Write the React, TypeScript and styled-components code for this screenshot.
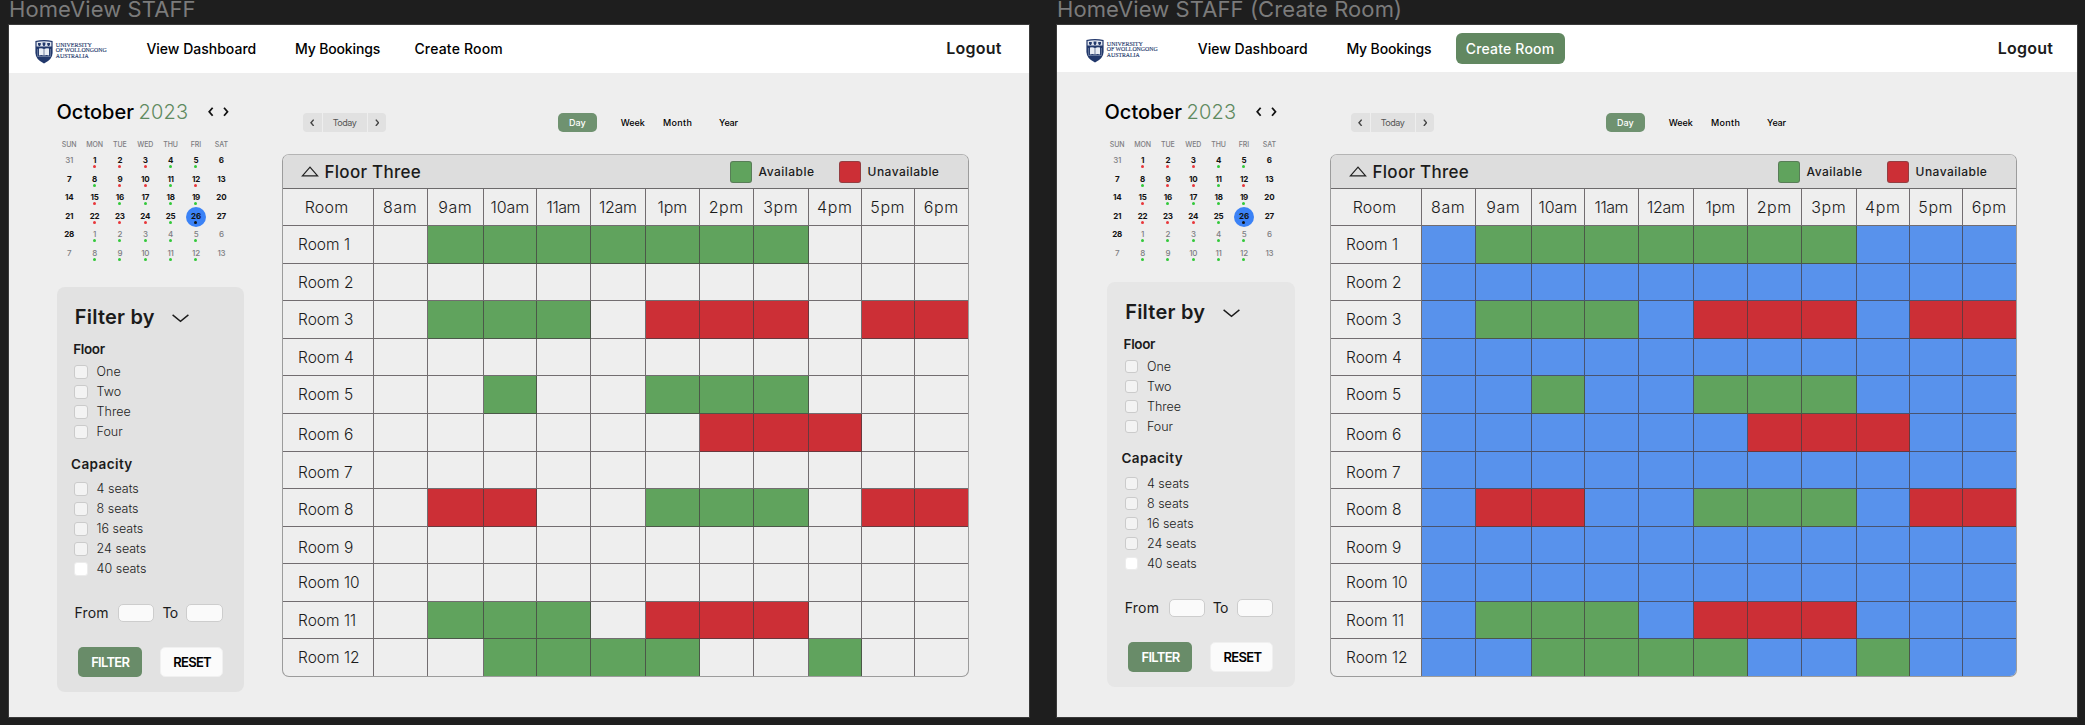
import React from 'react';
import styled, { createGlobalStyle, css } from 'styled-components';

const GlobalStyle = createGlobalStyle`
  * { box-sizing: border-box; }
  body { margin: 0; background: #1e1e1e; font-family: Inter, "Liberation Sans", sans-serif; color: #1b1b1b; }
`;

type Status = 'free' | 'busy' | 'none';
const statusColor = { free: '#60a35d', busy: '#cc2f36' };
const gridLine = 'rgba(66, 60, 64, 0.72)';

/* ---------- canvas ---------- */

const Canvas = styled.div`
  display: flex;
  gap: 28px;
  width: 2085px;
  height: 725px;
  padding-left: 9px;
  overflow: hidden;
  background: #1e1e1e;
`;

const Artboard = styled.section`
  display: flex;
  flex-direction: column;
  width: 1020px;
`;

const ArtboardTitle = styled.h2`
  margin: 0;
  height: 25px;
  font-size: 22px;
  font-weight: 400;
  line-height: 19px;
  letter-spacing: 0.1px;
  color: #7b7b7b;
  white-space: nowrap;
`;

const Frame = styled.div`
  display: flex;
  flex-direction: column;
  height: 692px;
  background: #eeeeee;
  box-shadow: 0 0 0 1px #3a3a3a;
`;

/* ---------- header ---------- */

const Header = styled.header<{ $tall: boolean }>`
  display: flex;
  align-items: center;
  height: ${(p) => (p.$tall ? 48 : 47)}px;
  padding: ${(p) => (p.$tall ? '0 27.5px 0 26px' : '0 24px 0 29.4px')};
  background: #fff;
`;

const LogoMark = styled.svg`
  display: block;
  overflow: visible;
  width: 74px;
  height: 24px;
  margin-top: 5px;
`;

const Nav = styled.nav`
  display: flex;
  align-items: center;
  margin-left: 37.4px;
  font-size: 14px;
  font-weight: 500;
  color: #000;
`;

const NavLink = styled.a<{ $width: number; $active?: boolean; $spacing?: number }>`
  display: flex;
  align-items: center;
  width: ${(p) => p.$width}px;
  height: 31px;
  padding-bottom: 1px;
  white-space: nowrap;
  letter-spacing: ${(p) => p.$spacing ?? 0}px;
  ${(p) =>
    p.$active &&
    css`
      margin-left: -9.5px;
      padding-left: 9.5px;
      border-radius: 6px;
      background: #628861;
      color: #fff;
    `}
`;

const Logout = styled.a`
  margin: -2px 0 0 auto;
  font-size: 16px;
  font-weight: 600;
  letter-spacing: 0.2px;
`;

const Logo = () => (
  <LogoMark viewBox="0 0 74 24">
    <path d="M.4 1Q9 -1 17.6 1V13Q17.4 19.5 9 23.5Q.6 19.5 .4 13Z" fill="#22386b" />
    <path d="M1.6 1.9Q9 .4 16.4 1.9V6.4H1.6Z" fill="#dfe4ee" />
    <path d="M3 3h2.8v1.6l-.8 1.3H3.8L3 4.6zM7.6 2.6h2.8v1.8L9.6 6H8.4l-.8-1.6zM12.2 3H15v1.6l-.8 1.3H13l-.8-1.3z" fill="#22386b" />
    <path d="M4 8.6Q6.6 7.8 8.7 9V15.6Q6.6 14.6 4 15.4ZM14 8.6Q11.4 7.8 9.3 9V15.6Q11.4 14.6 14 15.4Z" fill="#e9edf4" />
    <path d="M2.6 9V16.5H15.4V9" fill="none" stroke="#8f9dbb" strokeWidth=".6" />
    <g fill="#22386b" stroke="#22386b" strokeWidth=".15" fontFamily='"Liberation Serif", serif' fontSize="7">
      <text x="20.8" y="6.5" textLength="36" lengthAdjust="spacingAndGlyphs">UNIVERSITY</text>
      <text x="20.8" y="12" textLength="50.8" lengthAdjust="spacingAndGlyphs">OF WOLLONGONG</text>
      <text x="20.8" y="17.5" textLength="32.8" lengthAdjust="spacingAndGlyphs">AUSTRALIA</text>
    </g>
  </LogoMark>
);

/* ---------- body ---------- */

const Body = styled.div<{ $tall: boolean }>`
  display: flex;
  padding-top: ${(p) => (p.$tall ? 27 : 28)}px;
`;

const Sidebar = styled.aside`
  display: flex;
  flex-direction: column;
  width: 273px;
  padding-left: 47.5px;
`;

const MonthRow = styled.div`
  display: flex;
  align-items: center;
  height: 24px;
  font-size: 20px;
`;

const MonthName = styled.span`
  width: 82px;
  font-weight: 500;
  color: #000;
`;

const YearName = styled.span`
  width: 69.4px;
  font-weight: 300;
  letter-spacing: 0.2px;
  color: #5f8a5f;
`;

const Arrow = styled.svg<{ $size: number; $color: string; $gap?: number }>`
  display: block;
  width: ${(p) => p.$size * 0.6}px;
  height: ${(p) => p.$size}px;
  margin-left: ${(p) => p.$gap ?? 0}px;
  fill: none;
  stroke: ${(p) => p.$color};
  stroke-width: 1.9;
`;

const Weekdays = styled.div`
  display: grid;
  grid-template-columns: repeat(7, 25.37px);
  height: 13px;
  margin-top: 14px;
  font-size: 7px;
  font-weight: 500;
  line-height: 14px;
  letter-spacing: -0.1px;
  text-align: center;
  color: #7d7d82;
`;

const Days = styled.div`
  display: grid;
  grid-template-columns: repeat(7, 25.37px);
  grid-auto-rows: 18.6px;
`;

const DayCell = styled.div<{ $muted: boolean; $selected: boolean }>`
  position: relative;
  z-index: 0;
  display: flex;
  flex-direction: column;
  align-items: center;
  font-size: 8px;
  font-weight: ${(p) => (p.$muted ? 500 : 700)};
  line-height: 18px;
  letter-spacing: -0.25px;
  color: ${(p) => (p.$muted ? '#7d7d82' : '#111')};
  ${(p) =>
    p.$selected &&
    css`
      &::before {
        content: '';
        position: absolute;
        z-index: -1;
        top: 0;
        left: calc(50% - 10px);
        width: 20px;
        height: 20px;
        border-radius: 50%;
        background: #3b82f6;
      }
    `}
`;

const Dot = styled.i<{ $color: string }>`
  width: 3px;
  height: 3px;
  margin-top: -4px;
  border-radius: 50%;
  background: ${(p) => p.$color};
`;

/* ---------- filter panel ---------- */

const Panel = styled.div<{ $tall: boolean }>`
  width: 187.5px;
  height: 405.5px;
  margin: ${(p) => (p.$tall ? '24.4px 0 0 0.3px' : '19.2px 0 0 2.7px')};
  padding-top: 18.2px;
  border-radius: 8px;
  background: ${(p) => (p.$tall ? '#e2e2e2' : '#e6e6e6')};
`;

const PanelTitle = styled.div`
  display: flex;
  align-items: center;
  height: 24px;
  padding-left: 18px;
  font-size: 20px;
  font-weight: 600;
  letter-spacing: 0.22px;
  white-space: nowrap;
`;

const Chevron = styled.svg`
  width: 17px;
  height: 9px;
  margin-left: 17.6px;
  margin-top: 3px;
  fill: none;
  stroke: #1b1b1b;
  stroke-width: 1.4;
`;

const GroupTitle = styled.div<{ $top: number; $left: number; $spacing: number }>`
  margin-top: ${(p) => p.$top}px;
  padding-left: ${(p) => p.$left}px;
  font-size: 13.5px;
  font-weight: 600;
  line-height: 20px;
  letter-spacing: ${(p) => p.$spacing}px;
`;

const OptionList = styled.div<{ $top: number }>`
  display: flex;
  flex-direction: column;
  margin-top: ${(p) => p.$top}px;
  padding-left: 17.6px;
`;

const Option = styled.label`
  display: flex;
  align-items: center;
  gap: 8.6px;
  height: 20px;
  font-size: 12.5px;
  font-weight: 300;
`;

const Box = styled.span<{ $bright: boolean }>`
  width: 13.6px;
  height: 13.6px;
  border: 1px solid ${(p) => (p.$bright ? '#ececec' : '#cbcbcb')};
  border-radius: 3px;
  background: ${(p) => (p.$bright ? '#ffffff' : '#f3f3f3')};
`;

const RangeRow = styled.div`
  display: flex;
  align-items: center;
  height: 18px;
  margin-top: 25px;
  padding-left: 17.6px;
  font-size: 14px;
`;

const RangeLabel = styled.span<{ $width: number }>`
  width: ${(p) => p.$width}px;
  padding-bottom: 1px;
  letter-spacing: ${(p) => (p.$width > 40 ? 0.2 : -0.6)}px;
`;

const RangeInput = styled.span`
  width: 36.2px;
  height: 18px;
  margin-right: 8px;
  border: 1px solid #cdcdcd;
  border-radius: 5px;
  background: #fafafa;
`;

const Buttons = styled.div`
  display: flex;
  gap: 18.4px;
  margin-top: 25.4px;
  padding-left: 20.9px;
`;

const PanelButton = styled.button<{ $primary?: boolean }>`
  width: ${(p) => (p.$primary ? 64 : 63)}px;
  height: 30px;
  padding: 0 0 0 1px;
  border: ${(p) => (p.$primary ? '0' : '1px solid #f0f0f0')};
  border-radius: 5px;
  background: ${(p) => (p.$primary ? '#698c69' : '#fbfbfb')};
  color: ${(p) => (p.$primary ? '#fff' : '#000')};
  font-family: inherit;
  font-size: 13px;
  font-weight: 600;
  letter-spacing: -0.7px;
`;

/* ---------- toolbar ---------- */

const Main = styled.main`
  width: 687px;
`;

const Toolbar = styled.div`
  display: flex;
  align-items: center;
  height: 19px;
  margin-top: 13px;
  padding-left: 21px;
  font-size: 9px;
`;

const Pager = styled.div`
  display: flex;
  gap: 1px;
  width: 83px;
  height: 19px;
  border-radius: 4px;
  overflow: hidden;
`;

const PagerPart = styled.span<{ $grow?: boolean }>`
  display: flex;
  align-items: center;
  justify-content: center;
  width: 18.5px;
  flex: ${(p) => (p.$grow ? '1' : 'none')};
  letter-spacing: -0.5px;
  background: #e1e1e1;
  color: #555;
`;

const ViewTab = styled.span<{ $width: number; $active?: boolean; $spacing?: number }>`
  width: ${(p) => p.$width}px;
  font-weight: 500;
  color: #000;
  letter-spacing: ${(p) => p.$spacing ?? 0}px;
  ${(p) =>
    p.$active &&
    css`
      height: 19px;
      margin: 0 24px 0 172px;
      border-radius: 5px;
      background: #6f9270;
      color: #fff;
      text-align: center;
      line-height: 19px;
    `}
`;

/* ---------- schedule ---------- */

const Schedule = styled.div`
  width: 687px;
  margin-top: 22px;
  border: 1px solid #9c9c9c;
  border-top-color: #b4b4b4;
  border-radius: 7px;
  overflow: hidden;
`;

const ScheduleTitle = styled.div`
  display: flex;
  align-items: center;
  height: 34px;
  padding-left: 17.5px;
  border-bottom: 1px solid #6c6a6b;
  background: #dddddd;
  font-size: 17px;
  font-weight: 500;
  letter-spacing: 0.27px;
`;

const Triangle = styled.svg`
  width: 18px;
  height: 11px;
  margin-right: 6px;
  fill: none;
  stroke: #222;
  stroke-width: 1.2;
`;

const Legend = styled.div`
  display: flex;
  margin-left: auto;
`;

const LegendItem = styled.div<{ $width: number }>`
  display: flex;
  align-items: center;
  gap: 6.4px;
  width: ${(p) => p.$width}px;
  font-size: 12px;
  letter-spacing: 0.46px;
`;

const Swatch = styled.span<{ $color: string }>`
  width: 22.4px;
  height: 22px;
  border: 1px solid rgba(80, 80, 80, 0.45);
  border-radius: 3px;
  background: ${(p) => p.$color};
`;

const Grid = styled.div`
  display: grid;
  grid-template-columns: 91px 54px 56px 53px 54px 55px 54px 54px 55px 53px 53px 53px;
  grid-template-rows: 37px 38px 37px 38px 37px 38px 38px 37px 38px 37px 38px 37px 37px;
`;

const Cell = styled.div<{ $last: boolean; $bottom: boolean; $fill?: string }>`
  border-right: ${(p) => (p.$last ? '0' : `1px solid ${gridLine}`)};
  border-bottom: ${(p) => (p.$bottom ? '0' : `1px solid ${gridLine}`)};
  background: ${(p) => p.$fill ?? 'transparent'};
`;

const HeadCell = styled(Cell)<{ $spacing: number; $inset: number }>`
  display: flex;
  align-items: center;
  justify-content: center;
  padding-right: ${(p) => p.$inset}px;
  font-size: 16px;
  font-weight: 300;
  letter-spacing: ${(p) => p.$spacing}px;
`;

const RoomCell = styled(Cell)<{ $drop: number }>`
  display: flex;
  align-items: center;
  padding-left: 15px;
  padding-top: ${(p) => p.$drop * 2}px;
  font-size: 15.5px;
  font-weight: 300;
`;

/* ---------- data ---------- */

const R = '#e8363a';
const G = '#32c83a';
const K = '#111111';
const weeks: [number, (string | null)?, boolean?][][] = [
  [[31, null, true], [1, R], [2, R], [3, R], [4, G], [5, G], [6]],
  [[7], [8, G], [9, R], [10, R], [11, G], [12, R], [13]],
  [[14], [15, R], [16, G], [17, G], [18, G], [19, G], [20]],
  [[21], [22, R], [23, R], [24, R], [25, G], [26, K], [27]],
  [[28], [1, G, true], [2, G, true], [3, G, true], [4, G, true], [5, G, true], [6, null, true]],
  [[7, null, true], [8, G, true], [9, G, true], [10, G, true], [11, G, true], [12, G, true], [13, null, true]],
];

const hours: [string, number][] = [
  ['8am', 0.6], ['9am', 0.6], ['10am', -0.1], ['11am', -0.5], ['12am', -0.3], ['1pm', -0.1],
  ['2pm', 0.6], ['3pm', 0.6], ['4pm', 0.6], ['5pm', 0.6], ['6pm', 0.6],
];

// One character per hour: f = free, b = busy, . = nothing set
const rooms: { slots: string; drop?: number }[] = [
  { slots: '.fffffff...' },
  { slots: '...........' },
  { slots: '.fff.bbb.bb' },
  { slots: '...........' },
  { slots: '..f..fff...' },
  { slots: '......bbb..', drop: 2 },
  { slots: '...........', drop: 2 },
  { slots: '.bb..fff.bb', drop: 2.4 },
  { slots: '...........', drop: 2.2 },
  { slots: '...........' },
  { slots: '.fff.bbb...' },
  { slots: '..ffff..f..' },
];

const toStatus = (c: string): Status => (c === 'f' ? 'free' : c === 'b' ? 'busy' : 'none');

/* ---------- components ---------- */

const ArrowIcon = ({ dir, size, color, gap }: { dir: 'left' | 'right'; size: number; color: string; gap?: number }) => (
  <Arrow viewBox="0 0 6 10" $size={size} $color={color} $gap={gap}>
    <path d={dir === 'left' ? 'M4.9 .8L1.3 5L4.9 9.2' : 'M1.1 .8L4.7 5L1.1 9.2'} />
  </Arrow>
);

const Calendar = () => (
  <div>
    <MonthRow>
      <MonthName>October</MonthName>
      <YearName>2023</YearName>
      <ArrowIcon dir="left" size={9.5} color="#111" />
      <ArrowIcon dir="right" size={9.5} color="#111" gap={9.8} />
    </MonthRow>
    <Weekdays>
      {['SUN', 'MON', 'TUE', 'WED', 'THU', 'FRI', 'SAT'].map((d) => (
        <span key={d}>{d}</span>
      ))}
    </Weekdays>
    <Days>
      {weeks.flat().map(([day, dot, muted], i) => (
        <DayCell key={i} $muted={!!muted} $selected={day === 26}>
          {day}
          {dot && <Dot $color={dot} />}
        </DayCell>
      ))}
    </Days>
  </div>
);

const Options = ({ items, top }: { items: string[]; top: number }) => (
  <OptionList $top={top}>
    {items.map((item) => (
      <Option key={item}>
        <Box $bright={item === '40 seats'} />
        {item}
      </Option>
    ))}
  </OptionList>
);

const FilterPanel = ({ tall }: { tall: boolean }) => (
  <Panel $tall={tall}>
    <PanelTitle>
      Filter by
      <Chevron viewBox="0 0 17 9">
        <path d="M.6 .9L8.5 7.4L16.4 .9" />
      </Chevron>
    </PanelTitle>
    <GroupTitle $top={9.8} $left={16.4} $spacing={-0.35}>Floor</GroupTitle>
    <Options top={2.9} items={['One', 'Two', 'Three', 'Four']} />
    <GroupTitle $top={11.7} $left={14.3} $spacing={0.4}>Capacity</GroupTitle>
    <Options top={5.3} items={['4 seats', '8 seats', '16 seats', '24 seats', '40 seats']} />
    <RangeRow>
      <RangeLabel $width={43.8}>From</RangeLabel>
      <RangeInput />
      <RangeLabel $width={24}>To</RangeLabel>
      <RangeInput />
    </RangeRow>
    <Buttons>
      <PanelButton $primary>FILTER</PanelButton>
      <PanelButton>RESET</PanelButton>
    </Buttons>
  </Panel>
);

const RoomSchedule = ({ emptyFill }: { emptyFill?: string }) => (
  <Schedule>
    <ScheduleTitle>
      <Triangle viewBox="0 0 18 11">
        <path d="M9 1.2L16.6 9.9H1.4Z" />
      </Triangle>
      Floor Three
      <Legend>
        <LegendItem $width={109}>
          <Swatch $color={statusColor.free} />
          Available
        </LegendItem>
        <LegendItem $width={129.2}>
          <Swatch $color={statusColor.busy} />
          Unavailable
        </LegendItem>
      </Legend>
    </ScheduleTitle>
    <Grid>
      <HeadCell $last={false} $bottom={false} $spacing={0.2} $inset={3}>Room</HeadCell>
      {hours.map(([label, spacing], i) => (
        <HeadCell key={label} $last={i === 10} $bottom={false} $spacing={spacing} $inset={0.5}>
          {label}
        </HeadCell>
      ))}
      {rooms.map(({ slots, drop }, r) => (
        <React.Fragment key={r}>
          <RoomCell $last={false} $bottom={r === 11} $drop={drop ?? 0}>
            Room {r + 1}
          </RoomCell>
          {slots.split('').map((c, i) => {
            const status = toStatus(c);
            return (
              <Cell
                key={i}
                $last={i === 10}
                $bottom={r === 11}
                $fill={status === 'none' ? emptyFill : statusColor[status]}
              />
            );
          })}
        </React.Fragment>
      ))}
    </Grid>
  </Schedule>
);

const HomeView = ({ title, creating }: { title: string; creating: boolean }) => (
  <Artboard>
    <ArtboardTitle>{title}</ArtboardTitle>
    <Frame>
      <Header $tall={!creating}>
        <Logo />
        <Nav>
          <NavLink $width={148.6}>View Dashboard</NavLink>
          <NavLink $width={119.4} $spacing={-0.15}>My Bookings</NavLink>
          <NavLink $width={108.5} $spacing={0.18} $active={creating}>Create Room</NavLink>
        </Nav>
        <Logout>Logout</Logout>
      </Header>
      <Body $tall={!creating}>
        <Sidebar>
          <Calendar />
          <FilterPanel tall={!creating} />
        </Sidebar>
        <Main>
          <Toolbar>
            <Pager>
              <PagerPart><ArrowIcon dir="left" size={7.5} color="#444" /></PagerPart>
              <PagerPart $grow>Today</PagerPart>
              <PagerPart><ArrowIcon dir="right" size={7.5} color="#444" /></PagerPart>
            </Pager>
            <ViewTab $width={38.7} $active>Day</ViewTab>
            <ViewTab $width={42.2}>Week</ViewTab>
            <ViewTab $width={56.2} $spacing={0.35}>Month</ViewTab>
            <ViewTab $width={30} $spacing={-0.15}>Year</ViewTab>
          </Toolbar>
          <RoomSchedule emptyFill={creating ? '#5892ec' : undefined} />
        </Main>
      </Body>
    </Frame>
  </Artboard>
);

export default function App() {
  return (
    <>
      <GlobalStyle />
      <Canvas>
        <HomeView title="HomeView STAFF" creating={false} />
        <HomeView title="HomeView STAFF (Create Room)" creating />
      </Canvas>
    </>
  );
}
